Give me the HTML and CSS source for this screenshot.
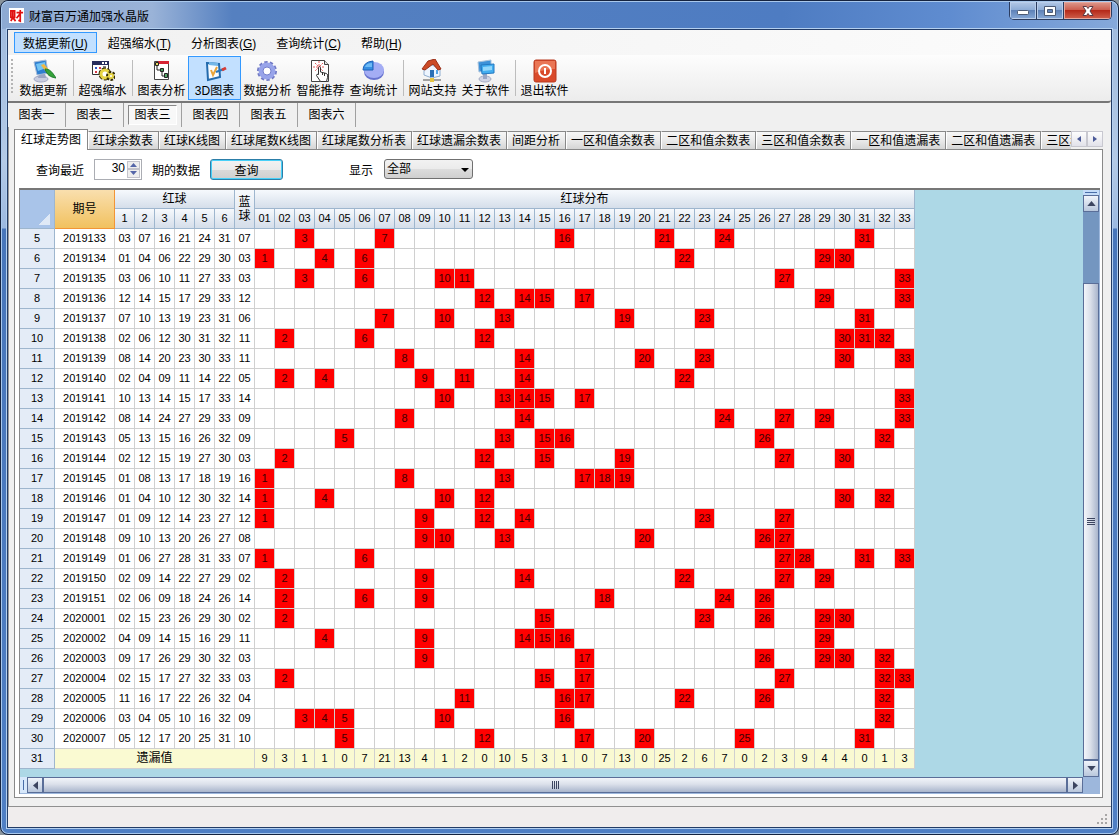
FILE: index.html
```html
<!DOCTYPE html>
<html lang="zh-CN">
  <head>
    <meta charset="UTF-8" />
    <meta name="viewport" content="width=device-width, initial-scale=1.0" />
    <title>财富百万通加强水晶版</title>
    <link rel="stylesheet" href="styles.css">
    <script defer src="script.js"></script>
  </head>
  <body>
    <div class="window">
      <!-- title bar -->
      <div class="titlebar">
        <svg class="logo" viewBox="0 0 16 16">
          <rect width="16" height="16" fill="#fff" />
          <path d="M2 3h4v7H2zM4 4v6M2 14l2-4 3 4M8 5h7M12 2v12l-2-1M12 6l-4 5" fill="none" stroke="#e01010" stroke-width="1.8" />
        </svg>
        <span class="title">财富百万通加强水晶版</span>
        <div class="caption">
          <button class="cap min" aria-label="最小化"><svg viewBox="0 0 14 10"><rect x="1.500" y="4.500" width="11" height="4" rx="1" fill="#fff" stroke="#4c5a74" /></svg></button>
          <button class="cap max" aria-label="最大化"><svg viewBox="0 0 14 10"><path d="M1.500 .5h11v9h-11z M4.500 3.500h5v3h-5z" fill="#fff" fill-rule="evenodd" stroke="#4c5a74" /></svg></button>
          <button class="cap close" aria-label="关闭"><svg viewBox="0 0 14 10"><path d="M2 .5h3.500L7 2.500 8.500 .5H12L9 5l3 4.500H8.500L7 7.500 5.500 9.500H2L5 5z" fill="#fff" stroke="#5c3a44" /></svg></button>
        </div>
      </div>

      <div class="client">
        <!-- menu -->
        <div class="menubar">
          <button class="menu on">数据更新(<u>U</u>)</button>
          <button class="menu">超强缩水(<u>T</u>)</button>
          <button class="menu">分析图表(<u>G</u>)</button>
          <button class="menu">查询统计(<u>C</u>)</button>
          <button class="menu">帮助(<u>H</u>)</button>
        </div>

        <!-- toolbar -->
        <div class="toolbar">
          <i class="grip"></i>
          <button class="tool">
            <svg viewBox="0 0 24 24">
              <ellipse cx="9" cy="20" rx="7" ry="3" fill="#c9cde0" stroke="#a3a9c4" />
              <path d="M7 14h6l1 5H6z" fill="#9aa5c4" />
              <path d="M2 3l12-2 2 13-11 2z" fill="#2f7fd0" stroke="#a9bcd8" />
              <path d="M4 5l9-2 1 6-8 3z" fill="#73c4f4" />
              <path d="M9 6l3-1 5 6-3 2z" fill="#f2b840" />
              <path d="M13 10c5 0 7 3 11 9-6-1-9-3-11-9z" fill="#35a339" stroke="#1d7c2b" />
            </svg>
            <span>数据更新</span>
          </button>
          <i class="sep"></i>
          <button class="tool">
            <svg viewBox="0 0 24 24">
              <path d="M1.500 2.500h16v13h-16z" fill="#fff" stroke="#333" />
              <path d="M1 2h17v4H1z" fill="#272d5c" />
              <path d="M11 3h2v2h-2zM14 3h2v2h-2z" fill="#fff" />
              <path d="M4 8h2v2H4zM8 12h2v2H8z" fill="#3158c8" />
              <path d="M8 8h2v2H8zM4 12h2v2H4z" fill="#d63845" />
              <path d="M12 7h3v5h-3z" fill="#888" />
              <circle cx="14" cy="15" r="4" fill="none" stroke="#2d2600" stroke-width="5" stroke-dasharray="3 1" />
              <circle cx="14" cy="15" r="4" fill="#fff" stroke="#e6d443" stroke-width="3" />
              <circle cx="20" cy="17" r="3" fill="#fff" stroke="#342d00" stroke-width="4" stroke-dasharray="2 1" />
              <circle cx="20" cy="17" r="2" fill="#fff" stroke="#e6d443" stroke-width="2" />
            </svg>
            <span>超强缩水</span>
          </button>
          <i class="sep"></i>
          <button class="tool">
            <svg viewBox="0 0 24 24">
              <path d="M4.500 2.500h14v18h-14z" fill="#fff" stroke="#444" />
              <path d="M8 2h11v3H8z" fill="#d62232" />
              <path d="M7 6v5h5v6h4" fill="none" stroke="#222" />
              <path d="M5.500 3.500h3v3h-3z" fill="#e8d860" stroke="#222" />
              <path d="M10.500 9.500h3v3h-3z" fill="#409a58" stroke="#222" />
              <path d="M14.500 14.500h3v4h-3z" fill="#52a768" stroke="#222" />
            </svg>
            <span>图表分析</span>
          </button>
          <button class="tool on">
            <svg viewBox="0 0 24 24">
              <path d="M4 4l12 1 1 13-12 3z" fill="#f8fcff" stroke="#246bad" stroke-width="2" />
              <path d="M6 3l9 1v3l-9-1z" fill="#73b7e8" />
              <path d="M8 11l2 5 4-8" fill="none" stroke="#e8a43a" stroke-width="2" />
              <path d="M13 13l8-3" stroke="#2b75b8" stroke-width="2" />
              <path d="M19 11l4-2" stroke="#d63c37" stroke-width="3" />
            </svg>
            <span>3D图表</span>
          </button>
          <button class="tool">
            <svg viewBox="0 0 24 24">
              <circle cx="11" cy="12" r="8" fill="none" stroke="#7079c4" stroke-width="4" stroke-dasharray="3 2" />
              <circle cx="11" cy="12" r="6" fill="none" stroke="#98a4ea" stroke-width="5" />
              <circle cx="11" cy="12" r="4" fill="#fff" stroke="#7580cd" />
            </svg>
            <span>数据分析</span>
          </button>
          <button class="tool">
            <svg viewBox="0 0 24 24">
              <path d="M2.500 1.500h13l4 4v17h-17z" fill="#fff" stroke="#444" />
              <path d="M15.500 1.500v4h4" fill="#ddd" stroke="#444" />
              <path d="M10 2v11M4 8h12M6 4l8 8M14 4l-8 8" stroke="#e45c5c" stroke-dasharray="2 1" />
              <path d="M9.500 8.500q1.500-2 2 0V13l6 1.500q2 1 1 4l-1 4h-6l-4-6q0-2 2-1z" fill="#fff" stroke="#333" />
              <path d="M13.500 13v3M15.500 14v3" stroke="#333" />
            </svg>
            <span>智能推荐</span>
          </button>
          <button class="tool">
            <svg viewBox="0 0 24 24">
              <ellipse cx="12" cy="13" rx="10" ry="8" fill="#6773cf" />
              <ellipse cx="12" cy="11" rx="10" ry="8" fill="#a4adf4" />
              <path d="M11 11H1Q1 3 11 2z" fill="#368ee2" stroke="#1d61b8" />
              <path d="M10 4Q4 4 3 8h7z" fill="#6dbaf5" />
            </svg>
            <span>查询统计</span>
          </button>
          <i class="sep"></i>
          <button class="tool">
            <svg viewBox="0 0 24 24">
              <path d="M3 10l6-5 10 5v7l-8 2-8-3z" fill="#edf5ff" stroke="#90aed0" />
              <path d="M1 10L7 2l7-2 6 10-3 1-5-6-8 6z" fill="#cc4a26" stroke="#993019" />
              <path d="M9 11h4v7H9z" fill="#2a6fb5" />
              <path d="M15 11h2v4h-2z" fill="#56a5e5" />
              <path d="M2 21h18" stroke="#a1a1a1" stroke-width="2" />
              <path d="M9 19h4v4H9z" fill="#e5c343" />
            </svg>
            <span>网站支持</span>
          </button>
          <button class="tool">
            <svg viewBox="0 0 24 24">
              <ellipse cx="11" cy="20" rx="6" ry="3" fill="#d0d4e5" stroke="#a6adc4" />
              <path d="M9 14h4v6H9z" fill="#9aa7c6" />
              <path d="M4 3l13-2v10L5 13z" fill="#3d91d8" stroke="#a9c3dd" />
              <path d="M7 6l13-1v9l-12 1z" fill="#43aef0" stroke="#2479c2" />
              <path d="M9 8l9-1v4l-9 1z" fill="#93d7fb" />
            </svg>
            <span>关于软件</span>
          </button>
          <i class="sep"></i>
          <button class="tool">
            <svg viewBox="0 0 24 24">
              <rect x="1" y="1" width="22" height="22" rx="2" fill="#d94a2b" stroke="#b83a21" />
              <path d="M2 2h20v8q-10 0-20 4z" fill="#ea7655" />
              <circle cx="12" cy="12" r="6" fill="none" stroke="#fff" stroke-width="2" />
              <path d="M12 9v6" stroke="#fff" stroke-width="2" />
            </svg>
            <span>退出软件</span>
          </button>
        </div>

        <!-- chart switch -->
        <div class="charts">
          <button class="chart"><span>图表一</span></button>
          <button class="chart"><span>图表二</span></button>
          <button class="chart on"><span>图表三</span></button>
          <button class="chart"><span>图表四</span></button>
          <button class="chart"><span>图表五</span></button>
          <button class="chart"><span>图表六</span></button>
        </div>

        <div class="main">
          <div class="tabs">
            <div class="tablist" role="tablist">
              <button class="tab on" role="tab">红球走势图</button>
              <button class="tab" role="tab">红球余数表</button>
              <button class="tab" role="tab">红球K线图</button>
              <button class="tab" role="tab">红球尾数K线图</button>
              <button class="tab" role="tab">红球尾数分析表</button>
              <button class="tab" role="tab">红球遗漏余数表</button>
              <button class="tab" role="tab">间距分析</button>
              <button class="tab" role="tab">一区和值余数表</button>
              <button class="tab" role="tab">二区和值余数表</button>
              <button class="tab" role="tab">三区和值余数表</button>
              <button class="tab" role="tab">一区和值遗漏表</button>
              <button class="tab" role="tab">二区和值遗漏表</button>
              <button class="tab" role="tab">三区和值遗漏表</button>
            </div>
            <button class="tabmove" aria-label="向左"><svg viewBox="0 0 8 8"><path d="M6 1v6L2 4z" fill="#4b5a98" /></svg></button>
            <button class="tabmove" aria-label="向右"><svg viewBox="0 0 8 8"><path d="M2 1v6l4-3z" fill="#4b5a98" /></svg></button>
          </div>

          <div class="panel">
            <form class="query">
              <label for="count">查询最近</label>
              <div class="spin">
                <input type="text" id="count" value="30" />
                <div class="updown">
                  <button type="button" aria-label="增加"><svg viewBox="0 0 7 4"><path d="M0 4l3.500-4L7 4z" fill="#5566a8" /></svg></button>
                  <button type="button" aria-label="减少"><svg viewBox="0 0 7 4"><path d="M0 0l3.500 4L7 0z" fill="#5566a8" /></svg></button>
                </div>
              </div>
              <span class="unit">期的数据</span>
              <button type="button" class="search">查询</button>
              <label for="show" class="showlabel">显示</label>
              <div class="combo">
                <select id="show">
                  <option>全部</option>
                </select>
              </div>
            </form>

            <div class="grid">
              <div class="sheet">
                <table class="balls">
                  <colgroup>
                    <col class="c-row" />
                    <col class="c-issue" />
                    <col span="40" class="c-num" />
                  </colgroup>
                  <thead>
                    <tr>
                      <th rowspan="2" class="corner"></th>
                      <th rowspan="2" class="issue">期号</th>
                      <th colspan="6">红球</th>
                      <th rowspan="2" class="blue">蓝球</th>
                      <th colspan="33">红球分布</th>
                    </tr>
                    <tr id="numbers"></tr>
                  </thead>
                  <tbody id="rows"></tbody>
                </table>
              </div>
              <div class="vscroll">
                <i class="split"></i>
                <button class="arrow" aria-label="上"><svg viewBox="0 0 10 6"><path d="M0 6l5-6 5 6z" fill="#3c4560" /></svg></button>
                <i class="track"></i>
                <i class="thumb"></i>
                <button class="arrow" aria-label="下"><svg viewBox="0 0 10 6"><path d="M0 0l5 6 5-6z" fill="#3c4560" /></svg></button>
              </div>
              <div class="hscroll">
                <i class="split"></i>
                <button class="arrow" aria-label="左"><svg viewBox="0 0 6 10"><path d="M6 0v10L0 5z" fill="#3c4560" /></svg></button>
                <i class="thumb"></i>
                <button class="arrow" aria-label="右"><svg viewBox="0 0 6 10"><path d="M0 0v10l6-5z" fill="#3c4560" /></svg></button>
              </div>
            </div>
          </div>
        </div>

        <div class="status">
          <svg class="size" viewBox="0 0 11 11"><path d="M8 0h2v2H8zM4 4h2v2H4zM8 4h2v2H8zM0 8h2v2H0zM4 8h2v2H4zM8 8h2v2H8z" fill="#a8a6a6" /></svg>
        </div>
      </div>
    </div>
  </body>
</html>
```

FILE: styles.css
```css
* {
  box-sizing: border-box;
}
body {
  margin: 0;
  background: #8a949c;
  color: #000;
  font-family: "Liberation Sans", "Noto Sans CJK SC", sans-serif;
  font-size: 12px;
}
button {
  margin: 0;
  padding: 0;
  border: none;
  background: none;
  color: inherit;
  font: inherit;
  white-space: nowrap;
}
svg {
  display: block;
}

/* window frame */
.window {
  display: flex;
  flex-direction: column;
  height: 100vh;
  padding: 0 6px 6px;
  border: 1px solid #15233f;
  border-radius: 8px;
  background: linear-gradient(#9db8dc 0, #b4cae6 160px, #9cb9e0 227px, #4876ba 228px, #4f7fc4 100%);
  box-shadow: inset 0 0 0 1px #a9c8ec;
}
.titlebar {
  display: flex;
  align-items: center;
  height: 28px;
  margin: 0 -5px;
  padding: 0 0 0 7px;
  border-top: 1px solid #a9c8ec;
  border-radius: 7px 7px 0 0;
  background: linear-gradient(90deg, #8daad3, #9ab3d8 150px, #5580c0 230px, #4e7cc2 70%, #5f8cd0 85%, #86a9da);
}
.logo {
  width: 15px;
  height: 15px;
}
.title {
  flex: 1;
  margin-left: 5px;
}
.caption {
  display: flex;
  align-self: flex-start;
  height: 18px;
  margin-right: 5px;
  border: 1px solid #2b3c60;
  border-top: none;
  border-radius: 0 0 5px 5px;
  overflow: hidden;
}
.cap {
  display: flex;
  align-items: center;
  justify-content: center;
  width: 27px;
  border-right: 1px solid #2b3c60;
  background: linear-gradient(#b3c8e6, #8eacd6 45%, #5f82b8 50%, #87a9d8);
  box-shadow: inset 0 0 0 1px #b9cdea;
}
.cap svg {
  width: 14px;
  height: 10px;
}
.close {
  width: 47px;
  border-right: none;
  background: linear-gradient(#dd9a8e, #cc5f50 45%, #b52a1a 50%, #d0604c);
  box-shadow: inset 0 0 0 1px #e6a89e;
}
.client {
  display: flex;
  flex: 1;
  flex-direction: column;
  min-height: 0;
  border: 1px solid #233c66;
  background: #f0f0f0;
  box-shadow: 0 0 0 1px #b4d0f0;
}

/* menu */
.menubar {
  display: flex;
  gap: 2px;
  height: 25px;
  padding: 2px 6px;
  background: linear-gradient(90deg, #f0f0f0, #fcfcfc);
}
.menu {
  padding: 0 8px;
  border: 1px solid transparent;
}
.menu.on {
  border-color: #3399ff;
  background: #c2e0ff;
}

/* toolbar */
.toolbar {
  display: flex;
  height: 48px;
  padding: 1px 3px 2px;
  border-bottom: 2px solid #777;
  border-radius: 0 0 3px 0;
  background: linear-gradient(#fdfdfd, #ececec);
}
.grip {
  width: 2px;
  margin: 3px 4px 6px 0;
  background: repeating-linear-gradient(#b5b5b5 0 2px, transparent 2px 4px);
}
.tool {
  display: flex;
  flex-direction: column;
  align-items: center;
  width: 53px;
  height: 44px;
  padding-top: 2px;
  border: 1px solid transparent;
}
.tool.on {
  border-color: #3399ff;
  background: #c2e0ff;
}
.tool svg {
  width: 24px;
  height: 24px;
}
.tool span {
  line-height: 16px;
}
.sep {
  width: 1px;
  margin: 4px 2px 3px 3px;
  background: #bdbdbd;
}

/* chart switch */
.charts {
  display: flex;
  height: 24px;
}
.chart {
  width: 58px;
  padding: 2px 4px;
  border-right: 1px solid #a0a0a0;
}
.chart span {
  display: block;
  line-height: 20px;
}
.chart.on span {
  border: 1px solid #888;
  border-right-color: #fff;
  border-bottom-color: #fff;
  background: #f8f8f8;
  line-height: 18px;
}

/* tab pages */
.main {
  display: flex;
  flex: 1;
  flex-direction: column;
  min-height: 0;
  padding: 2px 8px 8px 5px;
  border-left: 1px solid #999;
}
.tabs {
  display: flex;
  align-items: flex-end;
  height: 20px;
}
.tablist {
  display: flex;
  flex: 1;
  align-items: flex-end;
  min-width: 0;
  height: 21px;
  margin-bottom: -1px;
  overflow: hidden;
}
.tab {
  flex: none;
  height: 19px;
  padding: 1px 5px 0 4px;
  border: 1px solid #888;
  border-left-color: #fff;
  background: linear-gradient(#f6f6f6, #e9e9e9 50%, #d5d5d5);
  line-height: 17px;
}
.tab.on {
  z-index: 1;
  height: 21px;
  padding: 0 6px;
  border-left-color: #888;
  border-bottom: none;
  background: #fff;
}
.tabmove {
  display: flex;
  align-items: center;
  justify-content: center;
  width: 16px;
  height: 16px;
  margin-bottom: 2px;
  border: 1px solid #c8c8d0;
  background: linear-gradient(#fdfdfd, #e2e2ea);
}
.tabmove svg {
  width: 8px;
  height: 8px;
}
.panel {
  display: flex;
  flex: 1;
  flex-direction: column;
  min-height: 0;
  padding: 0 2px 3px 4px;
  border: 1px solid #888;
  background: #fff;
}

/* query */
.query {
  display: flex;
  align-items: center;
  height: 38px;
  padding-left: 17px;
}
.spin {
  display: flex;
  width: 48px;
  height: 21px;
  margin: 0 10px;
  padding: 1px;
  border: 1px solid #abadb3;
}
.spin input {
  width: 29px;
  padding: 0 0 2px;
  border: none;
  font: inherit;
  text-align: right;
}
.updown {
  display: flex;
  flex: 1;
  flex-direction: column;
  margin-left: 2px;
}
.updown button {
  display: flex;
  flex: 1;
  align-items: center;
  justify-content: center;
  border: 1px solid #c3c3cb;
  background: #eee;
}
.updown svg {
  width: 7px;
  height: 4px;
}
.search {
  width: 73px;
  height: 21px;
  margin-left: 10px;
  border: 1px solid #2c7ea8;
  border-radius: 3px;
  background: linear-gradient(#f2f2f2, #ebebeb 50%, #dadada 50%, #cfcfcf);
  box-shadow: inset 0 0 0 1px #48d0f8;
}
.showlabel {
  margin-left: 66px;
}
.combo {
  position: relative;
  margin-left: 11px;
}
.combo select {
  width: 89px;
  height: 20px;
  padding: 0 2px;
  border: 1px solid #707070;
  border-radius: 3px;
  background: linear-gradient(#f2f2f2, #ebebeb 50%, #dddddd 50%, #cfcfcf);
  font: inherit;
  appearance: none;
}
.combo::after {
  content: "";
  position: absolute;
  top: 9px;
  right: 4px;
  border: 4px solid transparent;
  border-top-color: #000;
  border-bottom: none;
}

/* grid */
.grid {
  display: grid;
  flex: 1;
  grid-template-columns: 1fr 17px;
  grid-template-rows: 1fr 17px;
  min-height: 0;
  border-top: 2px solid #777;
  border-left: 1px solid #888;
  background: #9db7dc;
}
.sheet {
  min-height: 0;
  overflow: hidden;
  background: #add8e6;
}
.balls {
  width: 895px;
  border-spacing: 0;
  table-layout: fixed;
  background: #fff;
  font-size: 11px;
  text-align: center;
}
.c-row {
  width: 35px;
}
.c-issue {
  width: 60px;
}
.c-num {
  width: 20px;
}
.balls th,
.balls td {
  height: 20px;
  padding: 0;
  border: solid #d0d0d0;
  border-width: 0 1px 1px 0;
  line-height: 19px;
  font-weight: normal;
}
.balls thead tr:first-child th {
  height: 19px;
  font-size: 12px;
  line-height: 18px;
}
.balls thead th {
  border-color: #9eb6ce;
  background: linear-gradient(#f6f9fd, #d5deea);
}
.balls thead .corner {
  background: linear-gradient(135deg, transparent 50%, #dfe9f6 50%) no-repeat right 4px bottom 3px / 11px 11px, #a9c4e9;
}
.balls thead .issue {
  border-color: #f29536;
  background: linear-gradient(#f9dfae, #f1c15f);
}
.balls thead tr:first-child .blue {
  padding: 0 3px;
  line-height: 14px;
}
.balls tbody th {
  border-color: #9eb6ce;
  background: #e4ecf7;
}
.balls .hit {
  background: red;
  background-clip: padding-box;
  color: #400000;
}
.balls .miss td {
  background: #fafad2;
}
.balls .miss td:first-of-type {
  font-size: 12px;
}

/* scroll bars */
.vscroll,
.hscroll {
  display: flex;
  background: #7496c0;
}
.vscroll {
  flex-direction: column;
  width: 16px;
}
.hscroll {
  height: 16px;
}
.arrow {
  display: flex;
  flex: none;
  align-items: center;
  justify-content: center;
  border: 1px solid #5a6e98;
  background: linear-gradient(#f0f4fa, #b9c7dc);
}
.vscroll .split {
  flex: none;
  height: 5px;
  border: 2px solid #c4dcf8;
  background: #4a6ea8;
}
.vscroll .arrow {
  height: 17px;
}
.vscroll .arrow svg {
  width: 9px;
  height: 5px;
}
.track {
  height: 71px;
}
.thumb {
  flex: 1;
  border: 1px solid #5a6e98;
}
.vscroll .thumb {
  background: repeating-linear-gradient(#3c4560 0 1px, transparent 1px 2px) no-repeat center / 8px 7px, linear-gradient(90deg, #f2f5fa, #dbe0ea 45%, #a9b5cc);
}
.hscroll .split {
  flex: none;
  width: 7px;
  border: 3px solid #d7e8fb;
  background: #4a6ea8;
}
.hscroll .arrow {
  width: 16px;
}
.hscroll .arrow svg {
  width: 5px;
  height: 9px;
}
.hscroll .thumb {
  background: repeating-linear-gradient(90deg, #3c4560 0 1px, transparent 1px 2px) no-repeat center / 7px 8px, linear-gradient(#f2f5fa, #dbe0ea 45%, #a9b5cc);
}

/* status */
.status {
  display: flex;
  align-items: flex-end;
  justify-content: flex-end;
  height: 21px;
  padding: 0 3px 2px;
  border-top: 1px solid #909090;
  background: #f0eded;
}
.size {
  width: 11px;
  height: 11px;
}
```

FILE: script.js
```js
const firstRow = 5;

// issue, six red balls, blue ball
const draws = [
  "2019133 03 07 16 21 24 31 07",
  "2019134 01 04 06 22 29 30 03",
  "2019135 03 06 10 11 27 33 03",
  "2019136 12 14 15 17 29 33 12",
  "2019137 07 10 13 19 23 31 06",
  "2019138 02 06 12 30 31 32 11",
  "2019139 08 14 20 23 30 33 11",
  "2019140 02 04 09 11 14 22 05",
  "2019141 10 13 14 15 17 33 14",
  "2019142 08 14 24 27 29 33 09",
  "2019143 05 13 15 16 26 32 09",
  "2019144 02 12 15 19 27 30 03",
  "2019145 01 08 13 17 18 19 16",
  "2019146 01 04 10 12 30 32 14",
  "2019147 01 09 12 14 23 27 12",
  "2019148 09 10 13 20 26 27 08",
  "2019149 01 06 27 28 31 33 07",
  "2019150 02 09 14 22 27 29 02",
  "2019151 02 06 09 18 24 26 14",
  "2020001 02 15 23 26 29 30 02",
  "2020002 04 09 14 15 16 29 11",
  "2020003 09 17 26 29 30 32 03",
  "2020004 02 15 17 27 32 33 03",
  "2020005 11 16 17 22 26 32 04",
  "2020006 03 04 05 10 16 32 09",
  "2020007 05 12 17 20 25 31 10",
];

const missing = [9, 3, 1, 1, 0, 7, 21, 13, 4, 1, 2, 0, 10, 5, 3, 1, 0, 7, 13, 0, 25, 2, 6, 7, 0, 2, 3, 9, 4, 4, 0, 1, 3];

let head = "";
for (let i = 1; i <= 6; i++) {
  head += "<th>" + i + "</th>";
}
for (let i = 1; i <= 33; i++) {
  head += "<th>" + String(i).padStart(2, "0") + "</th>";
}
document.getElementById("numbers").innerHTML = head;

let html = "";
draws.forEach(function (draw, index) {
  const parts = draw.split(" ");
  const reds = parts.slice(1, 7).map(Number);
  html += "<tr><th>" + (firstRow + index) + "</th>";
  parts.forEach(function (part) {
    html += "<td>" + part + "</td>";
  });
  for (let i = 1; i <= 33; i++) {
    html += reds.includes(i) ? '<td class="hit">' + i + "</td>" : "<td></td>";
  }
  html += "</tr>";
});

// last row: how many issues each ball has been missing
html += '<tr class="miss"><th>' + (firstRow + draws.length) + '</th><td colspan="8">遗漏值</td>';
missing.forEach(function (n) {
  html += "<td>" + n + "</td>";
});
html += "</tr>";
document.getElementById("rows").innerHTML = html;
```
